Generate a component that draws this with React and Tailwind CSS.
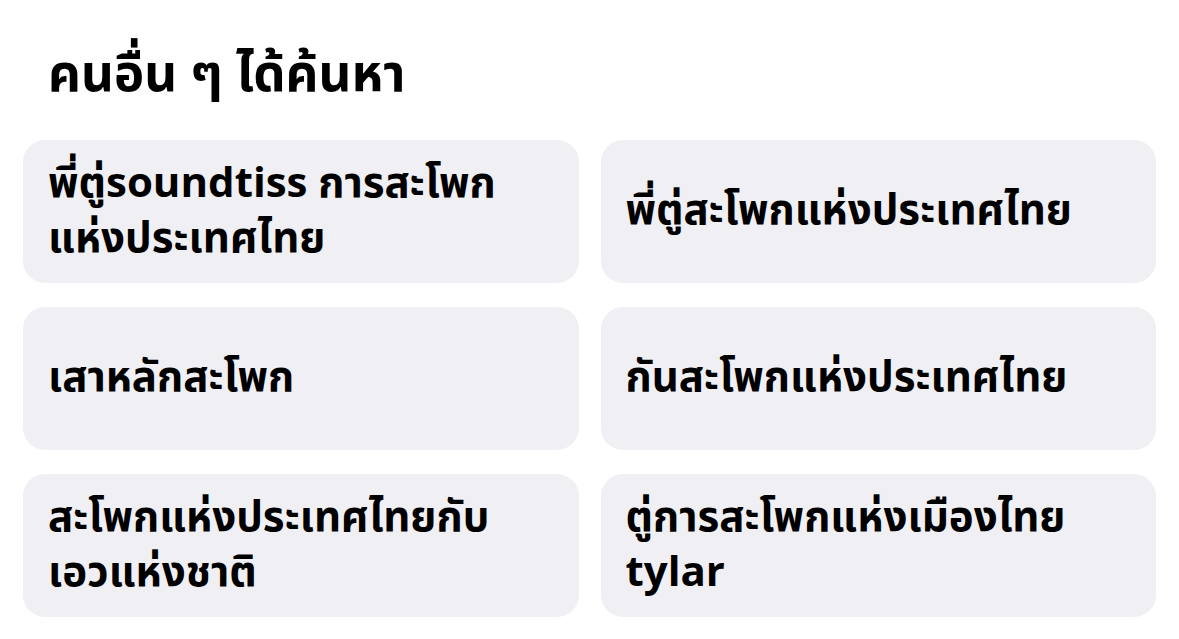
const items = [
  ["พี่ตู่soundtiss การสะโพก", "แห่งประเทศไทย"],
  ["พี่ตู่สะโพกแห่งประเทศไทย"],
  ["เสาหลักสะโพก"],
  ["กันสะโพกแห่งประเทศไทย"],
  ["สะโพกแห่งประเทศไทยกับ", "เอวแห่งชาติ"],
  ["ตู่การสะโพกแห่งเมืองไทย", "tylar"],
];

export default function App() {
  return (
    <div
      className="w-[1179px] h-[639px] bg-white text-black overflow-hidden"
      style={{ fontFamily: '"Noto Sans Thai", "Noto Sans", "Open Sans", sans-serif' }}
    >
      <div className="px-[23px] pt-[44px]">
        <h2 className="pl-[25px] text-[51px] font-bold leading-[64px] h-[64px]">คนอื่น ๆ ได้ค้นหา</h2>
        <div className="mt-[32px] grid grid-cols-2 gap-x-[22px] gap-y-[24px]">
          {items.map((lines) => (
            <div
              key={lines.join(" ")}
              className="h-[143px] rounded-[22px] bg-[#f0f0f4] flex flex-col justify-center px-[25px]"
            >
              {lines.map((l) => (
                <span key={l} className="block text-[42px] font-bold leading-[55px] whitespace-nowrap">
                  {l}
                </span>
              ))}
            </div>
          ))}
        </div>
      </div>
    </div>
  );
}
